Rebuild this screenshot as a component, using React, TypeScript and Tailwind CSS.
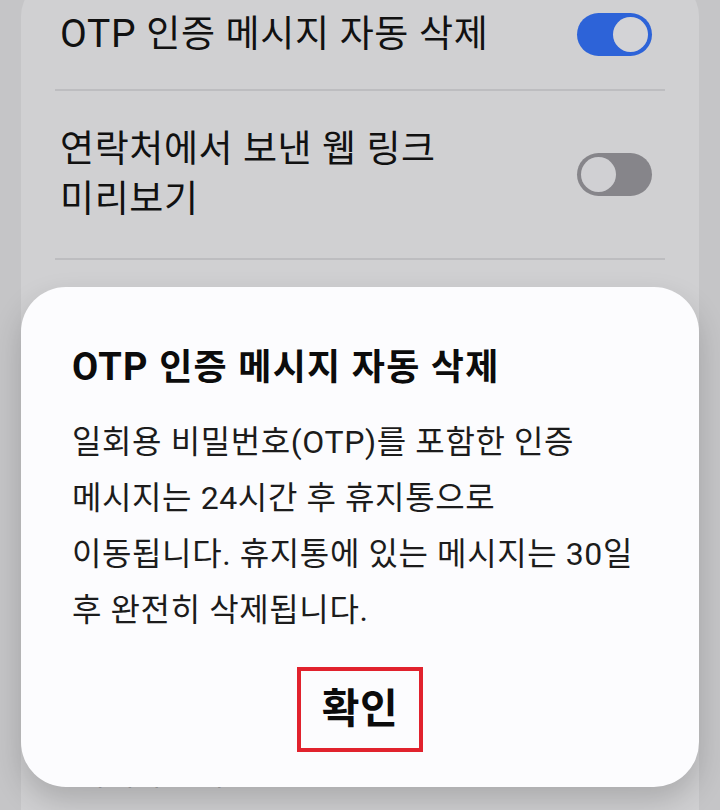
import React from "react";

const font = { fontFamily: '"Roboto", "Noto Sans CJK KR", sans-serif' };

function Toggle({ on }: { on: boolean }) {
  return on ? (
    <div className="flex h-[43px] w-[75px] shrink-0 items-center justify-end rounded-full bg-[#2d63d8] pr-[4px]">
      <div className="h-[35px] w-[35px] rounded-full bg-[#d3d3d6]" />
    </div>
  ) : (
    <div className="flex h-[43px] w-[75px] shrink-0 items-center justify-start rounded-full bg-[#86858a] pl-[4px]">
      <div className="h-[35px] w-[35px] rounded-full bg-[#d0d0d3]" />
    </div>
  );
}

export default function App() {
  return (
    <div
      className="relative h-[810px] w-[720px] overflow-hidden bg-[#c5c5c7] text-[#111]"
      style={font}
    >
      <div className="mx-[21px] -mt-[20px] h-[900px] rounded-[36px] bg-[#d0d0d2] px-[34px]">
        <div className="flex h-[109px] items-center justify-between pl-[5px] pr-[13px]">
          <span className="whitespace-nowrap text-[37px] leading-[52px] tracking-[0.7px]">
            <span className="text-[39px]">OTP</span> 인증 메시지 자동 삭제
          </span>
          <Toggle on />
        </div>
        <div className="h-[2px] bg-[#bdbdc0]" />
        <div className="flex h-[167px] items-center justify-between pl-[5px] pr-[13px]">
          <span className="text-[37px] leading-[50px] tracking-[0.6px]">
            연락처에서 보낸 웹 링크
            <br />
            미리보기
          </span>
          <Toggle on={false} />
        </div>
        <div className="h-[2px] bg-[#bdbdc0]" />
        <div className="flex h-[534px] items-end pl-[24px]">
          <span className="text-[30px] leading-[40px] text-[#333]">자세히 보기</span>
        </div>
      </div>

      <div className="absolute left-[21px] top-[287px] flex h-[500px] w-[678px] flex-col rounded-[45px] bg-[#fcfcfe] px-[51px] pt-[58px] shadow-[0_14px_30px_rgba(0,0,0,0.18)]">
        <div className="whitespace-nowrap text-[36px] font-bold leading-[44px] tracking-[1.3px] text-[#0c0c0c]">
          <span className="text-[38px]">OTP</span> 인증 메시지 자동 삭제
        </div>
        <div className="mt-[24px] whitespace-nowrap text-[32px] leading-[56px] tracking-[0.6px] text-[#1c1c1c]">
          일회용 비밀번호(OTP)를 포함한 인증
          <br />
          메시지는 24시간 후 휴지통으로
          <br />
          이동됩니다. 휴지통에 있는 메시지는 30일
          <br />
          후 완전히 삭제됩니다.
        </div>
        <div className="mt-[29px] flex justify-center">
          <div className="flex h-[85px] w-[126px] items-center justify-center border-[4px] border-[#e1222d]">
            <span className="text-[41px] font-bold leading-none tracking-[0.5px] text-[#0c0c0c]">확인</span>
          </div>
        </div>
      </div>
    </div>
  );
}
